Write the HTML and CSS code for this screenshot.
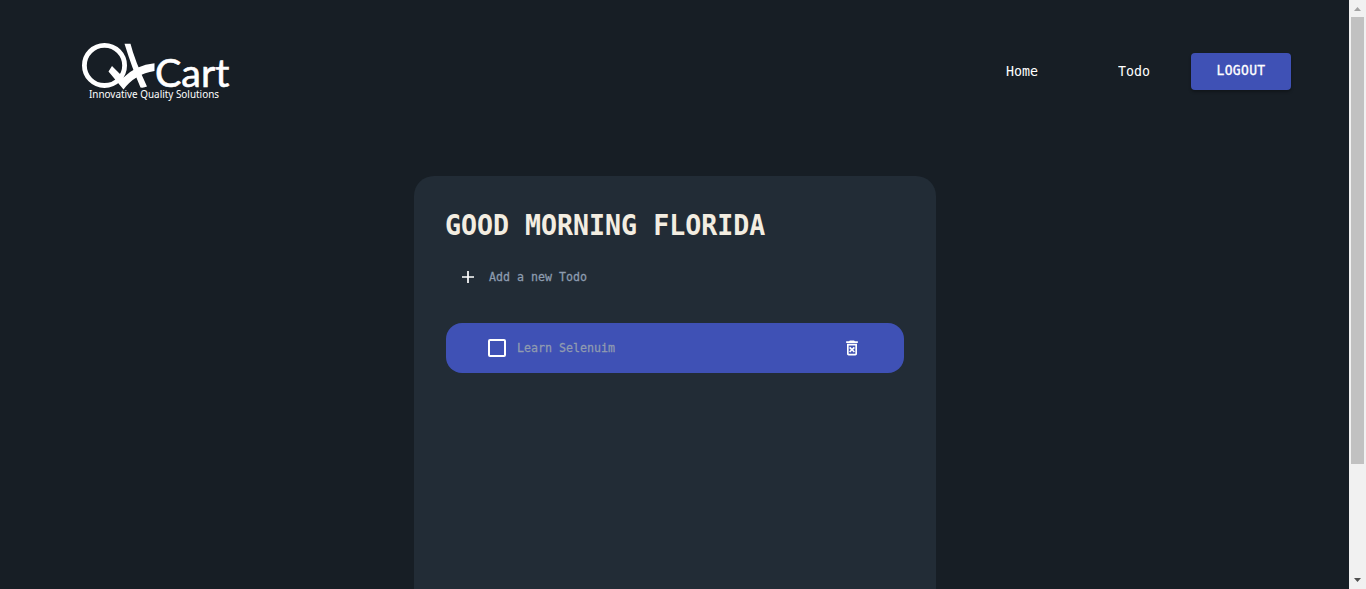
FILE: index.html
```html
<!DOCTYPE html>
<html lang="en">
<head>
<meta charset="utf-8">
<title>QACart Todo</title>
<link rel="stylesheet" href="styles.css">
</head>
<body>
<div class="page">
  <header class="navbar">
    <svg class="logo" viewBox="80 40 152 64" role="img" aria-label="QACart">
      <circle class="logo-ring" cx="104.5" cy="65.4" r="20.1"/>
      <path class="logo-fill" d="M124.500 43.800H130.500Q134.500 60 147 86.500Q144 88 140.500 87.500Q132 68 124.500 43.800Z"/>
      <path class="logo-fill" d="M112 66L108.500 71.500L123.500 89.500Q135 74 154.500 71V63.200Q136 65 123.500 77.500Z"/>
      <text class="logo-name" x="155" y="87.300" textLength="74.500" lengthAdjust="spacingAndGlyphs">Cart</text>
      <text class="logo-tag" x="89" y="98.400" textLength="130" lengthAdjust="spacingAndGlyphs">Innovative Quality Solutions</text>
    </svg>
    <nav class="links">
      <a class="link">Home</a>
      <a class="link">Todo</a>
      <button class="logout"><span class="tall">LOGOUT</span></button>
    </nav>
  </header>
  <main class="card">
    <h1 class="greeting">GOOD MORNING FLORIDA</h1>
    <div class="add">
      <svg class="plus" viewBox="0 0 12 12"><path d="M0 6H12M6 0V12"/></svg>
      <span class="tall">Add a new Todo</span>
    </div>
    <div class="todo">
      <span class="checkbox"></span>
      <span class="todo-name">Learn Selenuim</span>
      <svg class="trash" viewBox="0 0 24 24"><path d="M14.120 10.470L12 12.590l-2.130-2.120-1.410 1.410L10.590 14l-2.120 2.120 1.410 1.410L12 15.410l2.120 2.120 1.410-1.410L13.410 14l2.120-2.120zM15.500 4l-1-1h-5l-1 1H5v2h14V4zM6 19c0 1.100.9 2 2 2h8c1.100 0 2-.9 2-2V7H6v12zM8 9h8v10H8V9z"/></svg>
    </div>
  </main>
</div>
<aside class="scrollbar">
  <svg class="arrow arrow-up" viewBox="0 0 17 17"><path d="M5 11L8.500 7L12 11Z"/></svg>
  <div class="track"><div class="thumb"></div></div>
  <svg class="arrow arrow-down" viewBox="0 0 17 17"><path d="M5 6L8.500 10L12 6Z"/></svg>
</aside>
</body>
</html>
```
FILE: styles.css
```css
* { box-sizing: border-box; }
body {
  margin: 0;
  height: 589px;
  display: flex;
  overflow: hidden;
  background: #171e25;
  font-family: "DejaVu Sans Mono", monospace;
}
.page { flex: 1; display: flex; flex-direction: column; }
.navbar {
  height: 143px;
  padding: 0 58px 0 80px;
  display: flex;
  align-items: center;
  justify-content: space-between;
}
.logo { width: 152px; height: 64px; margin-top: 1px; }
.logo-ring { fill: none; stroke: #fff; stroke-width: 4.8; }
.logo-fill { fill: #fff; }
.logo-name { fill: #fff; stroke: #fff; stroke-width: .6; font: 38px Lato, sans-serif; }
.logo-tag { fill: #fff; font: 10px "Noto Sans", sans-serif; }
.links { display: flex; align-items: center; }
.link {
  width: 32px;
  margin-right: 80px;
  color: #fff;
  font-size: 13.29px;
  transform: scaleY(1.1);
}
.link + .link { margin-right: 41px; }
.tall { display: inline-block; transform: scaleY(1.08); }
.logout {
  width: 100px;
  height: 37px;
  padding: 0 0 3px;
  border: 0;
  border-radius: 4px;
  background: #3f51b5;
  box-shadow: 0 2px 3px rgba(0, 0, 0, .3);
  color: #fff;
  font: 13px "DejaVu Sans Mono", monospace;
  letter-spacing: .35px;
  -webkit-text-stroke: .3px;
}
.card {
  width: 522px;
  height: 413px;
  margin: 33px 0 0 414px;
  padding: 32px;
  border-radius: 20px 20px 0 0;
  background: #222c36;
}
.greeting {
  margin: 0 0 0 -1px;
  color: #f3ede1;
  font-size: 26.6px;
  line-height: 35px;
  white-space: nowrap;
  transform: scaleY(1.05);
}
.add {
  height: 50px;
  margin-top: 9px;
  padding-left: 16px;
  display: flex;
  align-items: center;
  gap: 15px;
  color: #8d9cb0;
  font-size: 11.63px;
  -webkit-text-stroke: .25px;
}
.plus { width: 12px; height: 12px; fill: none; stroke: #fff; stroke-width: 1.7; }
.todo {
  height: 50px;
  margin-top: 21px;
  padding: 0 42px;
  display: flex;
  align-items: center;
  border-radius: 16px;
  background: #3f51b5;
}
.checkbox { width: 18px; height: 18px; border: 2px solid #fff; border-radius: 2px; }
.todo-name {
  margin-left: 11px;
  flex: 1;
  color: #909bb0;
  font-size: 11.63px;
  transform: scaleY(1.08);
  -webkit-text-stroke: .25px;
}
.trash { width: 20px; height: 20px; fill: #fff; }
.scrollbar { width: 17px; display: flex; flex-direction: column; background: #f1f1f1; }
.arrow { width: 17px; height: 17px; }
.arrow-up { fill: #a3a3a3; }
.arrow-down { fill: #505050; }
.track { flex: 1; padding: 0 2px; }
.thumb { height: 447px; background: #c1c1c1; }
```
